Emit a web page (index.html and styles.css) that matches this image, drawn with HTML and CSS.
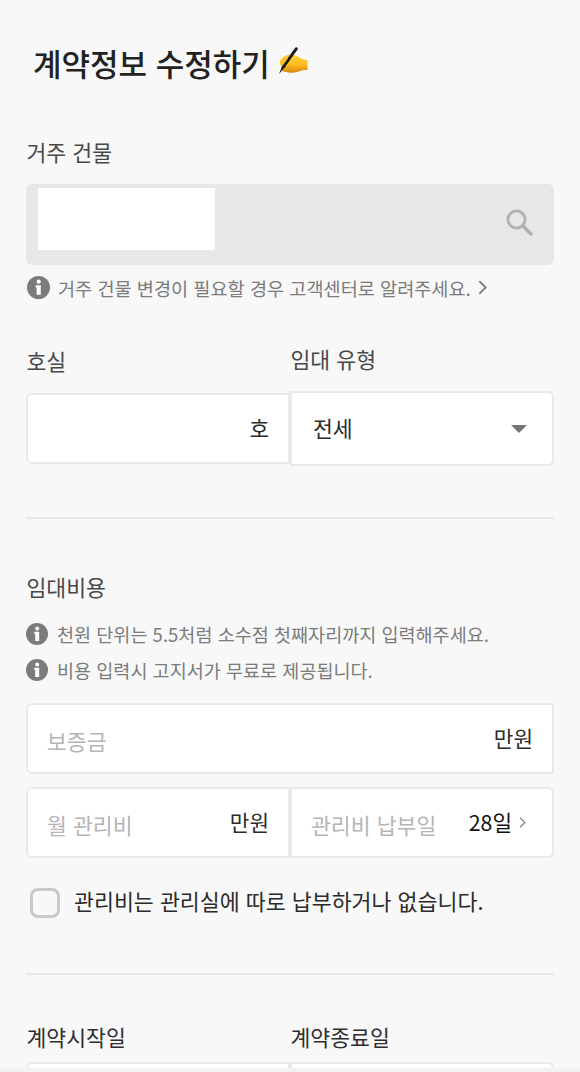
FILE: index.html
```html
<!DOCTYPE html>
<html lang="ko">
<head>
    <meta charset="UTF-8">
    <meta name="viewport" content="width=device-width, initial-scale=1.0">
    <title>계약정보 수정하기</title>
    <link rel="stylesheet" href="styles.css">
</head>
<body>
    <!-- shared icons -->
    <svg class="sprite">
        <symbol id="info" viewBox="0 0 22 22">
            <circle cx="11" cy="11" r="11" fill="#7b7b7b"/>
            <circle cx="11.2" cy="5.4" r="2" fill="#fff"/>
            <path d="M8.3 8.800h4.900v9.200H9.200v-6.900h-.9z" fill="#fff"/>
        </symbol>
        <symbol id="chevron" viewBox="0 0 8 14">
            <path d="M1 1l6 6-6 6" fill="none" stroke="currentColor" stroke-width="1.7"/>
        </symbol>
    </svg>

    <main class="page">
        <h1 class="title">
            <span>계약정보 수정하기</span>
            <svg class="hand" viewBox="0 0 30 28">
                <defs>
                    <linearGradient id="skin" x1="0" y1="0" x2="0" y2="1">
                        <stop offset="0" stop-color="#ffd23c"/>
                        <stop offset=".6" stop-color="#fbb91f"/>
                        <stop offset="1" stop-color="#d9860f"/>
                    </linearGradient>
                </defs>
                <path d="M2 15C3 11 8 7.500 13 7.500C17 7.500 20 9.500 24 12Q27 13 29.500 13V23Q25 22.500 22 24C18 26 12 26 8 25Q4 25 4 22Z" fill="url(#skin)"/>
                <path d="M8 21l6-1.500M9 23l6-1.500" fill="none" stroke="#e09a1c" stroke-width=".8"/>
                <path d="M18.200 1.800L6 19" stroke="#1b1b1b" stroke-width="3" stroke-linecap="round"/>
                <path d="M4.800 17.500l2.800 2L1 27z" fill="#1b1b1b"/>
                <path d="M1.500 16Q3 10.500 8 9.500Q11 9.500 9 12.500L5 18Q3 20 1.500 16Z" fill="#fcc32c"/>
                <path d="M11 15.500q4 1 6-2.500" fill="none" stroke="#fcc32c" stroke-width="3"/>
            </svg>
        </h1>

        <section class="building">
            <div class="label">거주 건물</div>
            <div class="search-box">
                <div class="building-name"></div>
                <svg class="search-icon" viewBox="0 0 28 28">
                    <circle cx="10.500" cy="10.500" r="8.600" fill="none" stroke="#b0b0b0" stroke-width="2.800"/>
                    <path d="M17 17l9 9" stroke="#b0b0b0" stroke-width="3.600"/>
                </svg>
            </div>
            <div class="help">
                <svg class="info"><use href="#info"/></svg>
                <span>거주 건물 변경이 필요할 경우 고객센터로 알려주세요.</span>
                <svg class="chevron"><use href="#chevron"/></svg>
            </div>
        </section>

        <section class="room">
            <div class="col">
                <div class="label">호실</div>
                <div class="field left"><span class="unit">호</span></div>
            </div>
            <div class="col type">
                <div class="label">임대 유형</div>
                <div class="field right select">
                    <span>전세</span>
                    <i class="caret"></i>
                </div>
            </div>
        </section>

        <hr class="line">

        <section class="cost">
            <div class="label">임대비용</div>
            <div class="help small">
                <svg class="info"><use href="#info"/></svg>
                <span>천원 단위는 5.5처럼 소수점 첫째자리까지 입력해주세요.</span>
            </div>
            <div class="help small">
                <svg class="info"><use href="#info"/></svg>
                <span>비용 입력시 고지서가 무료로 제공됩니다.</span>
            </div>
            <div class="field left deposit">
                <span class="placeholder">보증금</span>
                <span class="unit">만원</span>
            </div>
            <div class="row">
                <div class="field left">
                    <span class="placeholder">월 관리비</span>
                    <span class="unit">만원</span>
                </div>
                <div class="field right">
                    <span class="placeholder">관리비 납부일</span>
                    <span class="unit day">28일</span>
                    <svg class="chevron"><use href="#chevron"/></svg>
                </div>
            </div>
            <div class="check">
                <span class="checkbox"></span>
                <span class="check-text">관리비는 관리실에 따로 납부하거나 없습니다.</span>
            </div>
        </section>

        <hr class="line">

        <section class="period">
            <div class="col">
                <div class="label">계약시작일</div>
                <div class="field left"></div>
            </div>
            <div class="col">
                <div class="label">계약종료일</div>
                <div class="field right"></div>
            </div>
        </section>
    </main>
    <div class="bottom-bar"></div>
</body>
</html>
```
FILE: styles.css
```css
* {
    box-sizing: border-box;
}
html, body {
    height: 100%;
    margin: 0;
    overflow: hidden;
}
body {
    font-family: "Noto Sans CJK KR", sans-serif;
    font-size: 21.6px;
    color: #2b2b2b;
    background: #f8f8f8;
    white-space: nowrap;
}
.sprite {
    display: none;
}
svg {
    flex: none;
}
.page {
    height: 1072px;
    padding: 43px 26px 0;
    overflow: hidden;
}
.title {
    display: flex;
    height: 40px;
    margin: 0 0 0 7px;
    font-size: 31px;
    font-weight: 500;
    line-height: 40px;
    color: #222;
}
.hand {
    width: 30px;
    height: 28px;
    margin: 4px 0 0 8px;
}
.label {
    height: 30px;
    padding-left: .5px;
    line-height: 30px;
    color: #484848;
}
.building {
    margin-top: 54px;
}
.search-box {
    display: flex;
    justify-content: space-between;
    height: 81px;
    margin-top: 17px;
    padding: 4px 20px 0 12px;
    border-radius: 6px;
    background: #e7e7e7;
}
.building-name {
    width: 177px;
    height: 62px;
    background: #fff;
}
.search-icon {
    width: 28px;
    height: 28px;
    margin-top: 21px;
}
.help {
    display: flex;
    align-items: center;
    height: 36px;
    margin-top: 4px;
    padding-left: 1px;
    font-size: 18.6px;
    line-height: 28px;
    color: #7b7b7b;
}
.help span {
    margin: 1px 0 0 8px;
}
.info {
    width: 23px;
    height: 23px;
}
.help .chevron {
    width: 9px;
    height: 15px;
    margin-left: 7px;
}
.room, .row, .period {
    display: grid;
    grid-template-columns: 264px 264px;
}
.room {
    height: 121px;
    margin-top: 41px;
}
/* rent type column sits a little higher than the room column */
.room .type {
    margin-top: -2px;
}
.room .field {
    margin-top: 17px;
}
.room .type .field {
    height: 75px;
    margin-top: 17px;
}
.field {
    display: flex;
    align-items: center;
    height: 71px;
    padding: 0 19px 2px;
    border: 2px solid #e9e9e9;
    background: #fff;
}
.left {
    border-radius: 6px 0 0 6px;
}
.right {
    border-radius: 0 6px 6px 0;
}
.unit {
    margin-left: auto;
    font-size: 21.3px;
}
.select {
    justify-content: space-between;
    padding: 0 25px 3px 21px;
}
.caret {
    border: 8px solid transparent;
    border-top-color: #757575;
    border-bottom: 0;
    margin-top: 3px;
}
.line {
    height: 2px;
    margin: 50px 0 0;
    border: 0;
    background: #e9e9e9;
}
.cost {
    margin-top: 53px;
}
.small {
    height: 36px;
    margin: 0;
    padding-left: 0;
}
.small span {
    margin: 0 0 0 9px;
    font-size: 18.55px;
}
.cost .label {
    margin-bottom: 14px;
}
.small .info {
    width: 22px;
    height: 22px;
}
.deposit {
    margin-top: 15px;
}
.placeholder {
    margin-top: 5px;
    font-size: 21.6px;
    color: #b5b5b5;
}
.row {
    margin-top: 13px;
}
.row .right .unit {
    color: #111;
}
.row .chevron {
    width: 7px;
    height: 11px;
    margin: 2px 7px 0 7px;
    color: #888;
}
.check {
    display: flex;
    align-items: center;
    height: 36px;
    margin-top: 26px;
    padding-left: 4px;
    font-size: 21.7px;
    line-height: 32px;
}
.checkbox {
    width: 30px;
    height: 30px;
    margin: 1px 14px 0 0;
    border: 3px solid #c9c9c9;
    border-radius: 8px;
}
.check-text {
    margin-top: -3px;
}
.cost + .line {
    margin-top: 53px;
}
.period {
    margin-top: 47px;
}
.period .label {
    color: #2e2e2e;
}
.period .field {
    margin-top: 10px;
}
.bottom-bar {
    position: absolute;
    left: 0;
    right: 0;
    top: 1068px;
    height: 4px;
    background: #f2f2f2;
}
```
